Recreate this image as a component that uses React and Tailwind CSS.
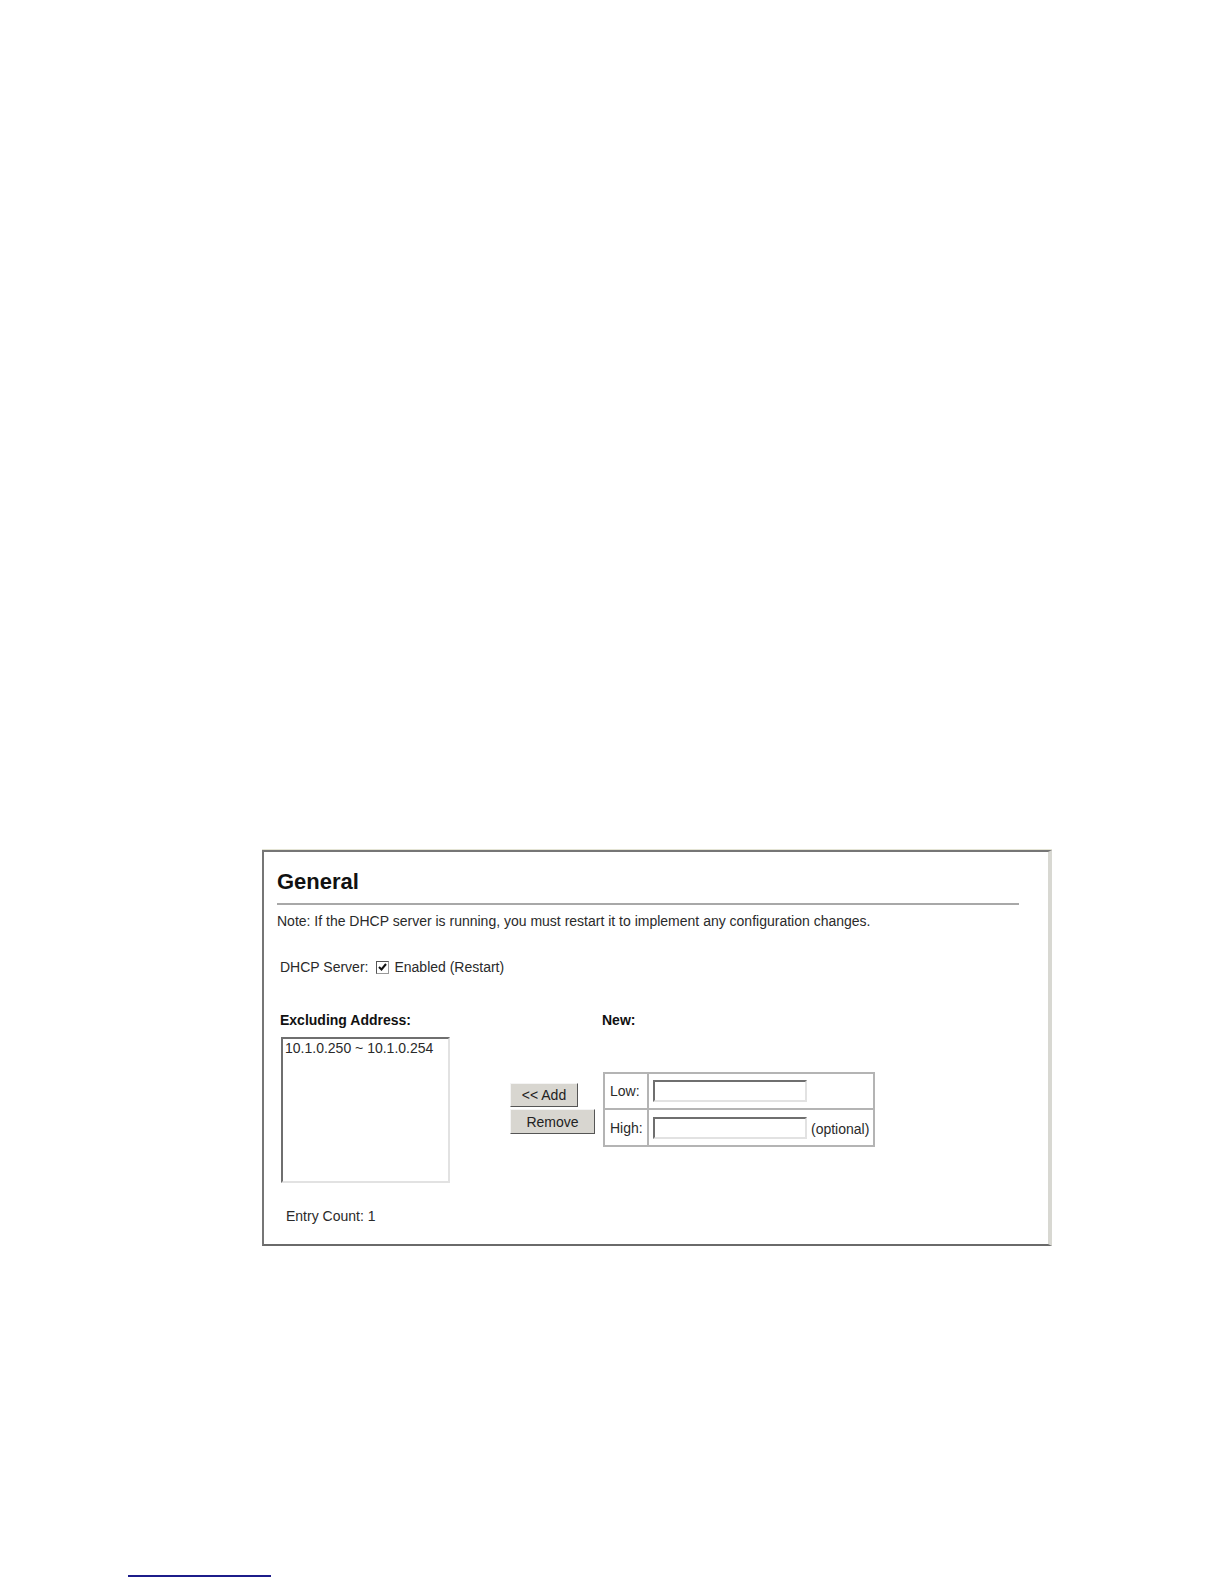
export default function App() {
  return (
    <div className="w-[1224px] h-[1584px] bg-white overflow-hidden" style={{ fontFamily: '"Liberation Sans", Arial, sans-serif' }}>
      <div className="ml-[262px] mt-[849px] w-[790px] h-[397px] border-t border-[#e4e4d4] flex flex-col">
        <div className="flex-1 border-t-2 border-l-2 border-b-2 border-r-[4px] border-t-[#767676] border-l-[#767676] border-b-[#6a6a6a] border-r-[#d8d8d2] pl-[13px] pt-[17px] text-[#2a2a2a]">
          <div className="text-[22px] leading-[26px] font-bold text-[#111]">General</div>
          <div className="mt-[8px] h-[2px] bg-[#a8a8a8] w-[742px]"></div>
          <div className="mt-[8px] text-[14px] leading-[16px]">
            Note: If the DHCP server is running, you must restart it to implement any configuration changes.
          </div>
          <div className="mt-[30px] ml-[3px] flex items-center text-[14px] leading-[16px]">
            <span>DHCP Server:</span>
            <span className="ml-[8px] w-[13px] h-[13px] border border-t-[#555] border-l-[#555] border-r-[#999] border-b-[#999] bg-white flex items-center justify-center">
              <svg width="11" height="11" viewBox="0 0 11 11">
                <path d="M2 5 L4.5 7.5 L9 2" fill="none" stroke="#111" strokeWidth="2" />
              </svg>
            </span>
            <span className="ml-[5px]">Enabled (Restart)</span>
          </div>
          <div className="mt-[37px] ml-[3px] flex items-start">
            <div className="w-[230px] flex flex-col">
              <div className="text-[14px] leading-[16px] font-bold text-[#111]">Excluding Address:</div>
              <div className="mt-[9px] ml-[1px] w-[169px] h-[146px] border-2 border-t-[#6f6f6f] border-l-[#6f6f6f] border-r-[#e2e2e2] border-b-[#e2e2e2] bg-white pl-[2px] pt-[1px] text-[14px] leading-[16px]">
                10.1.0.250 ~ 10.1.0.254
              </div>
              <div className="mt-[25px] ml-[6px] text-[14px] leading-[16px]">Entry Count: 1</div>
            </div>
            <div className="w-[92px] pt-[71px] flex flex-col items-start">
              <button className="w-[68px] h-[24px] bg-[#d8d6d0] border border-t-[#f4f4f4] border-l-[#f4f4f4] border-r-[#555] border-b-[#555] text-[14px] leading-[16px] text-[#222]">
                &lt;&lt; Add
              </button>
              <button className="mt-[2px] w-[85px] h-[25px] bg-[#d8d6d0] border border-t-[#f4f4f4] border-l-[#f4f4f4] border-r-[#555] border-b-[#555] text-[14px] leading-[16px] text-[#222]">
                Remove
              </button>
            </div>
            <div className="flex flex-col">
              <div className="text-[14px] leading-[16px] font-bold text-[#111]">New:</div>
              <div className="mt-[44px] ml-[1px] w-[272px] border-2 border-[#b4b4b4] flex flex-col text-[14px] leading-[16px]">
                <div className="h-[36px] flex border-b-2 border-[#b4b4b4]">
                  <div className="w-[44px] border-r-2 border-[#b4b4b4] flex items-center pl-[5px]">Low:</div>
                  <div className="flex-1 flex items-center pl-[4px]">
                    <div className="w-[154px] h-[22px] border-2 border-t-[#6f6f6f] border-l-[#6f6f6f] border-r-[#e2e2e2] border-b-[#e2e2e2] bg-white"></div>
                  </div>
                </div>
                <div className="h-[35px] flex">
                  <div className="w-[44px] border-r-2 border-[#b4b4b4] flex items-center pl-[5px]">High:</div>
                  <div className="flex-1 flex items-center pl-[4px]">
                    <div className="w-[154px] h-[22px] border-2 border-t-[#6f6f6f] border-l-[#6f6f6f] border-r-[#e2e2e2] border-b-[#e2e2e2] bg-white"></div>
                    <span className="ml-[4px] mt-[3px]">(optional)</span>
                  </div>
                </div>
              </div>
            </div>
          </div>
        </div>
      </div>
      <div className="ml-[128px] mt-[329px] w-[143px] h-[2px] bg-[#1c1c8a]"></div>
    </div>
  );
}
